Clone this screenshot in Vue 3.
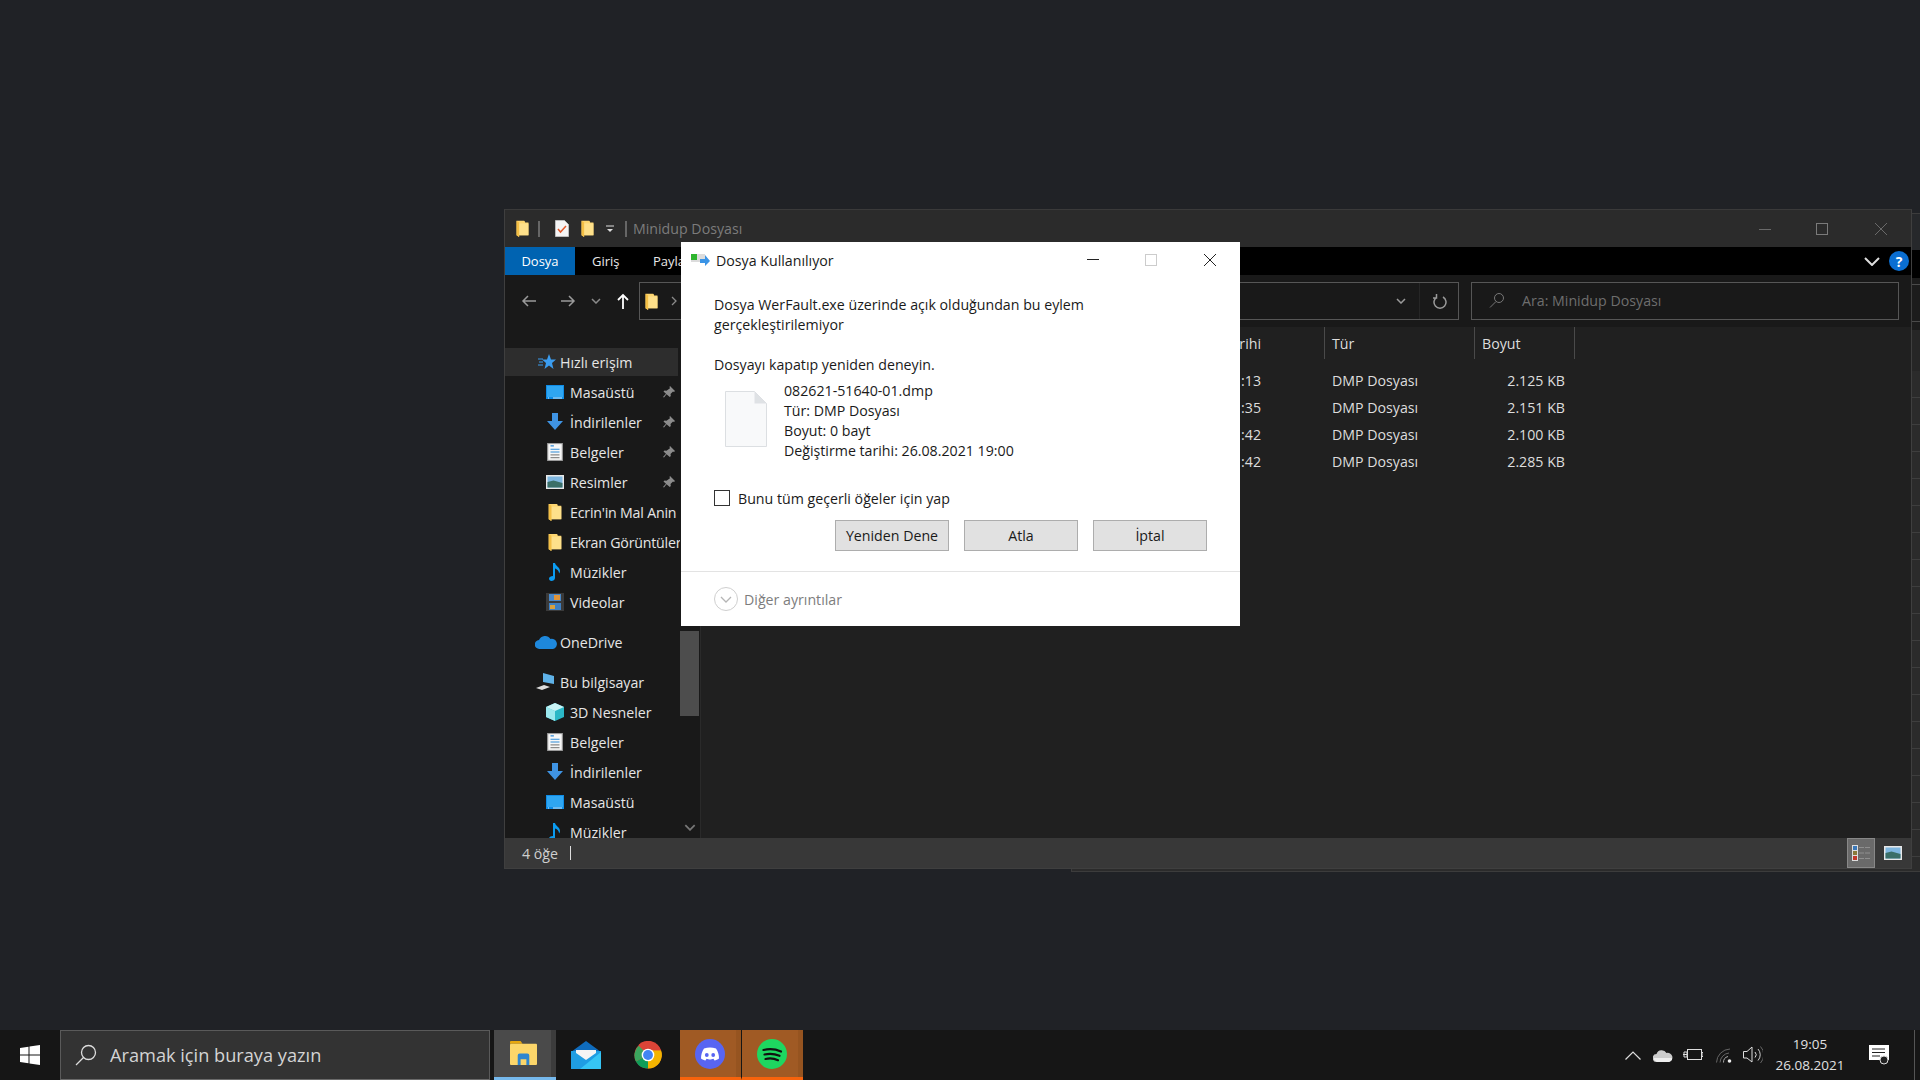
<script setup>
const quick = [
  { icon: 'desk', label: 'Masaüstü', pin: true },
  { icon: 'down', label: 'İndirilenler', pin: true },
  { icon: 'doc', label: 'Belgeler', pin: true },
  { icon: 'pic', label: 'Resimler', pin: true },
  { icon: 'folder', label: "Ecrin'in Mal Anin" },
  { icon: 'folder', label: 'Ekran Görüntüler' },
  { icon: 'music', label: 'Müzikler' },
  { icon: 'film', label: 'Videolar' },
]
const pc = [
  { icon: 'cube', label: '3D Nesneler' },
  { icon: 'doc', label: 'Belgeler' },
  { icon: 'down', label: 'İndirilenler' },
  { icon: 'desk', label: 'Masaüstü' },
  { icon: 'music', label: 'Müzikler' },
]
const rows = [
  { t: ':13', s: '2.125 KB' },
  { t: ':35', s: '2.151 KB' },
  { t: ':42', s: '2.100 KB' },
  { t: ':42', s: '2.285 KB' },
]
const behind = Array.from({ length: 19 }, (_, i) => i)
</script>

<template>
  <div class="desktop">
    <svg class="defs" width="0" height="0">
      <symbol id="folder" viewBox="0 0 14 20"><path d="M0 1h9l1 1v1h4v15H3v2l-3-2z" fill="#fdd670"/><path d="M3 4h11v14H3z" fill="#fee08a"/><path d="M0 1l3 2v17l-3-2z" fill="#f4bf45"/></symbol>
      <symbol id="desk" viewBox="0 0 18 14"><rect x="0" y="0" width="18" height="14" fill="#0f8ce6"/><rect x="1" y="1" width="16" height="11" fill="#2fa6f2"/><path d="M2 13h1M7 13h9" stroke="#cfe9fb"/></symbol>
      <symbol id="down" viewBox="0 0 18 18"><path d="M6 0h6v8h5l-8 9-8-9h5z" fill="#3f94e4"/></symbol>
      <symbol id="doc" viewBox="0 0 14 16"><rect x=".5" y=".5" width="13" height="15" fill="#f7f7f7" stroke="#9a9a9a"/><path d="M3 2.500h3M3 5.500h8M3 8h8" stroke="#2f8ad6"/><path d="M3 10.500h8M3 13h8" stroke="#8a8a8a"/></symbol>
      <symbol id="pic" viewBox="0 0 18 14"><rect width="18" height="14" fill="#e8e8e8"/><rect x="1.500" y="1.500" width="15" height="11" fill="#7fb7e0"/><path d="M1.500 7l6-1.500 9 2.500v4.500h-15z" fill="#3b6f68"/></symbol>
      <symbol id="music" viewBox="0 0 12 18"><path d="M4 0h2c.5 3 5 4 5 8 0 1-.5 2-1 2.500.3-2.500-2-4.500-4-5V15c0 2-2 3-3.500 3S0 17 0 15.500 2 13 4 13z" fill="#0b9bf0"/></symbol>
      <symbol id="film" viewBox="0 0 18 18"><rect width="18" height="18" fill="#3a3a3a"/><rect x="3" y="1" width="12" height="7" fill="#4a88c7"/><rect x="3" y="10" width="12" height="7" fill="#3f7fc0"/><rect x="8" y="2" width="6" height="5" fill="#e0953a"/><rect x="4" y="12" width="5" height="4" fill="#d9a13f"/></symbol>
      <symbol id="cube" viewBox="0 0 18 18"><path d="M9 0l9 4v10l-9 4-9-4V4z" fill="#2bb7c6"/><path d="M0 4l9 4v10l-9-4z" fill="#9be8ee"/><path d="M9 0l9 4-9 4-9-4z" fill="#c9f4f6"/></symbol>
      <symbol id="pin" viewBox="0 0 12 12"><path d="M7 0l5 5-1 1-1-.5-2.500 2.500.3 2-1 1L3.500 8.200 1 11.500 0 11l3-3.200L.5 5.500l1-1 2 .3L7 2.300 6.500 1z" fill="#8c8c8c"/></symbol>
      <symbol id="star" viewBox="0 0 18 16"><path d="M11 0l2 5.500h5l-4 3.500 1.500 6-4.500-3.500L6.500 15 8 9 4 5.500h5z" fill="#3b9df0"/><path d="M0 5h5M1 8h4M0 11h5" stroke="#3b9df0"/></symbol>
    </svg>

    <div class="back-window">
      <div class="bw-title"></div>
      <div class="bw-rib"></div>
      <div class="bw-nav"><div></div></div>
      <div class="bw-gap"></div>
      <div v-for="n in behind" :key="n" class="bw-row"></div>
    </div>

    <section class="explorer">
      <header class="ex-title">
        <svg class="i-folder"><use href="#folder"/></svg>
        <i class="bar"></i>
        <svg class="i-check" viewBox="0 0 14 17"><path d="M.5.500h9l4 4v12H.5z" fill="#f4f4f4" stroke="#bbb"/><path d="M3 9l2.500 3L11 6" fill="none" stroke="#e25a2b" stroke-width="1.500"/></svg>
        <svg class="i-folder"><use href="#folder"/></svg>
        <svg class="i-drop" viewBox="0 0 8 8"><path d="M0 1h8" stroke="#ddd"/><path d="M1 4h6L4 7z" fill="#ddd"/></svg>
        <i class="bar"></i>
        <span class="ex-name">Minidup Dosyası</span>
        <div class="ex-ctrl">
          <svg viewBox="0 0 12 12"><path d="M0 6.500h12" stroke="#6a6a6a"/></svg>
          <svg viewBox="0 0 12 12"><rect x=".5" y=".5" width="11" height="11" fill="none" stroke="#7a7a7a"/></svg>
          <svg viewBox="0 0 12 12"><path d="M0 0l12 12M12 0L0 12" stroke="#6a6a6a"/></svg>
        </div>
      </header>

      <nav class="ribbon">
        <span class="tab active">Dosya</span>
        <span class="tab">Giriş</span>
        <span class="tab">Paylaş</span>
        <svg class="rb-chev" viewBox="0 0 16 9"><path d="M1 1l7 7 7-7" fill="none" stroke="#ddd" stroke-width="2"/></svg>
        <span class="help">?</span>
      </nav>

      <div class="navbar">
        <svg class="nv a1" viewBox="0 0 16 14"><path d="M15 7H2M7 2L2 7l5 5" fill="none" stroke="#9a9a9a" stroke-width="1.500"/></svg>
        <svg class="nv a2" viewBox="0 0 16 14"><path d="M1 7h13M9 2l5 5-5 5" fill="none" stroke="#9a9a9a" stroke-width="1.500"/></svg>
        <svg class="nv a3" viewBox="0 0 10 6"><path d="M1 1l4 4 4-4" fill="none" stroke="#8a8a8a" stroke-width="1.500"/></svg>
        <svg class="nv a4" viewBox="0 0 14 16"><path d="M7 16V2M2 7l5-5 5 5" fill="none" stroke="#fff" stroke-width="1.800"/></svg>
        <div class="addr">
          <svg class="i-folder"><use href="#folder"/></svg>
          <svg class="gt" viewBox="0 0 6 10"><path d="M1 1l4 4-4 4" fill="none" stroke="#8a8a8a" stroke-width="1.300"/></svg>
          <svg class="addr-chev" viewBox="0 0 10 6"><path d="M1 1l4 4 4-4" fill="none" stroke="#9a9a9a" stroke-width="1.500"/></svg>
          <i class="addr-sep"></i>
          <svg class="refresh" viewBox="0 0 14 16"><path d="M4 3a6 6 0 1 0 6 0M3.500 0v4h-3.500" fill="none" stroke="#9a9a9a" stroke-width="1.500" transform="translate(0 1)"/></svg>
        </div>
        <div class="search">
          <svg viewBox="0 0 16 16"><circle cx="10" cy="6" r="4.500" fill="none" stroke="#777"/><path d="M7 9.500L1 15.500" stroke="#777"/></svg>
          <span>Ara: Minidup Dosyası</span>
        </div>
      </div>

      <div class="ex-body">
        <aside class="side">
          <div class="tree">
            <div class="row top sel"><svg class="ico"><use href="#star"/></svg><span>Hızlı erişim</span></div>
            <div v-for="q in quick" :key="q.label" class="row">
              <svg class="ico"><use :href="'#' + q.icon"/></svg>
              <span class="lbl" :class="{ tight: q.icon === 'folder' }">{{ q.label }}</span>
              <svg v-if="q.pin" class="pin"><use href="#pin"/></svg>
            </div>
            <div class="row top wide gap">
              <svg class="ico" viewBox="0 0 22 14"><path d="M4.500 14a4.500 4.500 0 0 1-.5-9A6.500 6.500 0 0 1 15.500 4 5 5 0 0 1 18 14z" fill="#1e88dc"/></svg>
              <span>OneDrive</span>
            </div>
            <div class="row top wide gap">
              <svg class="ico" viewBox="0 0 20 18"><path d="M7 0l11 3v8l-11-2z" fill="#5fb2e8"/><path d="M0 15l8-3 6 2-8 3z" fill="#ddd"/></svg>
              <span>Bu bilgisayar</span>
            </div>
            <div v-for="p in pc" :key="p.label" class="row">
              <svg class="ico"><use :href="'#' + p.icon"/></svg>
              <span class="lbl">{{ p.label }}</span>
            </div>
          </div>
          <div class="scroll">
            <div class="thumb"></div>
            <svg viewBox="0 0 10 6"><path d="M1 1l4 4 4-4" fill="none" stroke="#777" stroke-width="1.500"/></svg>
          </div>
        </aside>
        <main class="files">
          <div class="heads">
            <span class="h-date">rihi</span>
            <span class="h-type">Tür</span>
            <span class="h-size">Boyut</span>
          </div>
          <div v-for="(r, i) in rows" :key="i" class="frow">
            <span class="c-date">{{ r.t }}</span>
            <span class="c-type">DMP Dosyası</span>
            <span class="c-size">{{ r.s }}</span>
          </div>
        </main>
      </div>

      <footer class="status">
        <span>4 öğe</span><i></i>
        <div class="views">
          <span class="v-on"><svg viewBox="0 0 18 16"><rect width="6" height="16" fill="#ddd"/><rect x="1" y="1" width="4" height="4" fill="#3b78b8"/><rect x="1" y="6" width="4" height="4" fill="#8a7a3a"/><rect x="1" y="11" width="4" height="4" fill="#c0392b"/><path d="M7 2.500h5M13 2.500h5M7 8h5M13 8h5M7 13.500h5M13 13.500h5" stroke="#8f8f8f"/></svg></span>
          <span class="v-off"><svg viewBox="0 0 18 14"><use href="#pic"/></svg></span>
        </div>
      </footer>
    </section>

    <section class="dialog">
      <header class="d-title">
        <svg class="d-ico" viewBox="0 0 20 14"><rect x="0" y="1" width="14" height="8" fill="#dcdcdc"/><rect x="0" y="1" width="6" height="6" fill="#2fb52f"/><path d="M9 6h5V2l5 6-5 5v-3H9z" fill="#3b94e6"/></svg>
        <span>Dosya Kullanılıyor</span>
        <div class="d-ctrl">
          <svg viewBox="0 0 12 12"><path d="M0 5.500h12" stroke="#222"/></svg>
          <svg viewBox="0 0 12 12"><rect x=".5" y=".5" width="11" height="11" fill="none" stroke="#ccc"/></svg>
          <svg viewBox="0 0 12 12"><path d="M0 0l12 12M12 0L0 12" stroke="#222"/></svg>
        </div>
      </header>
      <div class="d-body">
        <p class="msg">Dosya WerFault.exe üzerinde açık olduğundan bu eylem<br>gerçekleştirilemiyor</p>
        <p class="retry">Dosyayı kapatıp yeniden deneyin.</p>
        <div class="fileinfo">
          <svg class="f-ico" viewBox="0 0 42 56"><path d="M.5.500h29l12 12v43H.5z" fill="#f8f9fa" stroke="#dcdfe2"/><path d="M29.500.500v12h12z" fill="#dfe2e5"/></svg>
          <div class="f-text">
            <div>082621-51640-01.dmp</div>
            <div>Tür: DMP Dosyası</div>
            <div>Boyut: 0 bayt</div>
            <div>Değiştirme tarihi: 26.08.2021 19:00</div>
          </div>
        </div>
        <label class="chk"><i></i><span>Bunu tüm geçerli öğeler için yap</span></label>
        <div class="btns">
          <button>Yeniden Dene</button>
          <button>Atla</button>
          <button>İptal</button>
        </div>
      </div>
      <footer class="d-foot">
        <span class="circle"><svg viewBox="0 0 12 7"><path d="M1 1l5 5 5-5" fill="none" stroke="#b5b5b5" stroke-width="1.300"/></svg></span>
        <span>Diğer ayrıntılar</span>
      </footer>
    </section>

    <footer class="taskbar">
      <div class="start">
        <svg viewBox="0 0 20 20"><path d="M0 3l8.500-1.200V9.500H0zM9.500 1.600L20 0v9.500H9.500zM0 10.500h8.500v7.700L0 17zM9.500 10.500H20V20L9.500 18.400z" fill="#fff"/></svg>
      </div>
      <div class="tsearch">
        <svg viewBox="0 0 22 22"><circle cx="13.500" cy="8.500" r="7" fill="none" stroke="#ddd" stroke-width="1.300"/><path d="M8.500 13.500L1 21" stroke="#ddd" stroke-width="1.300"/></svg>
        <span>Aramak için buraya yazın</span>
      </div>
      <div class="tile t-active">
        <svg viewBox="0 0 28 28"><path d="M0 2a1 1 0 0 1 1-1h10l2 3H0z" fill="#e8a70e"/><rect y="4" width="28" height="22" rx="1" fill="#fcd66a"/><path d="M8 26V16a2 2 0 0 1 2-2h8a2 2 0 0 1 2 2v10h-3v-6h-6v6z" fill="#2e86d0"/></svg>
      </div>
      <div class="tile">
        <svg class="mail" viewBox="0 0 30 28"><path d="M15 0l15 11H0z" fill="#0f6cbd"/><rect y="10" width="30" height="18" fill="#1f9de2"/><path d="M5 9h20v3l-10 7L5 12z" fill="#f4f4f4"/><path d="M30 11v17H9z" fill="#36c5f4"/></svg>
      </div>
      <div class="tile">
        <svg class="chrome" viewBox="0 0 30 30"><circle cx="15" cy="15" r="14.500" fill="#db4437"/><path d="M15 15L2 22a14.500 14.500 0 0 0 13 7.500z" fill="#0f9d58"/><path d="M15 29.500A14.500 14.500 0 0 0 29 10H15z" fill="#f4b400"/><path d="M2 22A14.500 14.500 0 0 1 5 5l10 10z" fill="#3ba55d"/><path d="M5 4A14.500 14.500 0 0 1 29 10H15z" fill="#db4437"/><circle cx="15" cy="15" r="6.800" fill="#fff"/><circle cx="15" cy="15" r="5.300" fill="#4285f4"/></svg>
      </div>
      <div class="tile t-run first">
        <svg viewBox="0 0 30 30"><circle cx="15" cy="15" r="15" fill="#5865f2"/><path d="M9 9.500c4-1.500 8-1.500 12 0 2 3 3 6 3 10-1.500 1.200-3 1.800-4.500 2l-1-1.700c-3 1-4 1-7 0l-1 1.700c-1.500-.2-3-.8-4.500-2 0-4 1-7 3-10z" fill="#fff"/><circle cx="11.800" cy="16" r="1.900" fill="#5865f2"/><circle cx="18.200" cy="16" r="1.900" fill="#5865f2"/></svg>
      </div>
      <div class="tile t-run last">
        <svg viewBox="0 0 30 30"><circle cx="15" cy="15" r="15" fill="#1ed760"/><path d="M6.500 11c6-1.500 12-1 17.500 1.500M7.500 15.500c5-1.200 10-.8 15 1.300M8.500 20c4.300-1 8.500-.6 12.500 1.200" fill="none" stroke="#111" stroke-width="2.200" stroke-linecap="round"/></svg>
      </div>

      <div class="tray">
        <svg class="t1" viewBox="0 0 16 9"><path d="M.5 8.500L8 1l7.500 7.500" fill="none" stroke="#ddd" stroke-width="1.200"/></svg>
        <svg class="t2" viewBox="0 0 20 13"><path d="M4 13a4 4 0 0 1-.5-8A5.500 5.500 0 0 1 13.500 4 4.500 4.500 0 0 1 16 13z" fill="#ccc"/><path d="M1 9h18v2l-3 2H4l-3-2z" fill="#eee"/></svg>
        <svg class="t3" viewBox="0 0 20 12"><rect x="4.500" y=".5" width="14" height="10" fill="none" stroke="#ddd"/><path d="M19 3.500h1v4h-1M0 5.500h4M1 3h3v5H1z" fill="none" stroke="#ddd"/></svg>
        <svg class="t4" viewBox="0 0 16 15"><path d="M.5 14.500A14 14 0 0 1 14 1M4 14.500A10 10 0 0 1 13 5" fill="none" stroke="#666"/><path d="M7.500 14.500A6 6 0 0 1 12 8.500" fill="none" stroke="#aaa"/><circle cx="13.500" cy="13" r="1.800" fill="#eee"/></svg>
        <svg class="t5" viewBox="0 0 20 20"><path d="M.5 6.500h3.500L9 2v15L4 13H.5z" fill="none" stroke="#ddd"/><path d="M12 7a4 4 0 0 1 0 5.500" fill="none" stroke="#ddd"/><path d="M15 4a8.500 8.500 0 0 1 0 11.500" fill="none" stroke="#ccc"/><path d="M17.500 1.500a12 12 0 0 1 0 16.500" fill="none" stroke="#666"/></svg>
        <div class="clock"><div>19:05</div><div>26.08.2021</div></div>
        <svg class="notif" viewBox="0 0 20 20"><path d="M0 0h20v15h-4l-1 3-3-3H0z" fill="#fff"/><path d="M3 4h13M3 7.500h13M3 11h8" stroke="#222"/><circle cx="15" cy="15" r="4" fill="#222" stroke="#ddd"/></svg>
        <i class="show"></i>
      </div>
    </footer>
  </div>
</template>

<style>
html, body { margin: 0; background: #202226; overflow: hidden; }
</style>

<style scoped>
* { box-sizing: border-box; }
.desktop { position: relative; width: 1920px; height: 1080px; background: #202226; overflow: hidden; font-family: "Open Sans", "Noto Sans", sans-serif; font-size: 14.200px; color: #e6e6e6; display: flex; flex-direction: column; justify-content: flex-end; }
.defs { position: absolute; }
svg { display: block; flex: none; }
i { display: block; font-style: normal; }

.back-window { position: absolute; left: 1071px; top: 213px; right: -10px; height: 659px; background: #303030; border: 1px solid #3c3c3c; overflow: hidden; }
.bw-title { height: 36px; background: #26282b; }
.bw-rib { height: 28px; background: #000; }
.bw-nav { height: 52px; background: #1c1c1c; padding-top: 6px; }
.bw-nav div { height: 38px; border-top: 1px solid #4a4a4a; border-bottom: 1px solid #4a4a4a; }
.bw-gap { height: 41px; background: #262626; }
.bw-row { height: 27px; background: #2b2b2b; border-bottom: 1px solid #3e3e3e; }

.explorer { position: absolute; left: 504px; top: 209px; width: 1408px; height: 660px; display: flex; flex-direction: column; background: #202020; border: 1px solid #3f3f3f; border-top-color: #3a3a3a; }
.ex-title { height: 37px; flex: none; background: #2b2b2b; display: flex; align-items: center; padding-left: 11px; }
.i-folder { width: 13px; height: 17px; }
.ex-title .i-folder:first-child { margin-right: 9px; }
.bar { width: 2px; height: 16px; background: #666; }
.i-check { width: 14px; height: 17px; margin: 0 12px 0 15px; }
.i-drop { width: 8px; height: 8px; margin: 0 11px 0 12px; }
.ex-name { margin-left: 6px; color: #7c7c7c; font-size: 14.200px; }
.ex-ctrl { margin-left: auto; display: flex; gap: 46px; padding-right: 24px; }
.ex-ctrl svg { width: 12px; height: 12px; }
.ex-ctrl svg:nth-child(2) { margin: 0 1px 0 -1px; }

.ribbon { height: 28px; flex: none; background: #000; display: flex; align-items: center; font-size: 13px; color: #e8e8e8; }
.tab { display: flex; align-items: center; height: 100%; margin-right: 0; padding-left: 17px; width: 70px; }
.tab.active { background: #0063b1; color: #fff; justify-content: center; padding: 0; margin-right: 17px; }
.tab:nth-child(2) { width: 61px; padding-left: 0; }
.tab:nth-child(3) { padding-left: 0; }
.rb-chev { width: 16px; height: 9px; margin-left: auto; }
.help { width: 20px; height: 20px; border-radius: 50%; background: #0a6ed1; color: #fff; font-weight: 700; font-size: 14px; display: flex; align-items: center; justify-content: center; margin: 0 2px 0 9px; }

.navbar { height: 52px; flex: none; background: #191919; display: flex; align-items: center; padding-left: 16px; }
.nv.a1 { width: 16px; height: 14px; }
.nv.a2 { width: 16px; height: 14px; margin-left: 23px; }
.nv.a3 { width: 10px; height: 6px; margin-left: 15px; }
.nv.a4 { width: 14px; height: 16px; margin-left: 15px; }
.addr { margin-left: 9px; width: 820px; height: 38px; border: 1px solid #565656; display: flex; align-items: center; padding-left: 5px; }
.gt { width: 6px; height: 10px; margin-left: 13px; }
.addr-chev { width: 10px; height: 6px; margin-left: auto; }
.addr-sep { width: 1px; height: 36px; background: #262626; margin-left: 13px; }
.refresh { width: 14px; height: 16px; margin: 0 11px 0 13px; }
.search { margin-left: 12px; width: 428px; height: 38px; border: 1px solid #565656; display: flex; align-items: center; padding: 0 0 2px 17px; color: #6e6e6e; font-size: 14.200px; }
.search svg { width: 16px; height: 16px; margin-right: 17px; }

.ex-body { flex: 1; min-height: 0; display: flex; }
.side { width: 196px; flex: none; display: flex; background: #191919; overflow: hidden; border-right: 1px solid #2a2a2a; }
.tree { width: 175px; flex: none; padding: 21px 0 0 0; overflow: hidden; }
.row { height: 30px; display: flex; align-items: center; padding-left: 41px; white-space: nowrap; font-size: 14.200px; position: relative; overflow: hidden; }
.row .ico { width: 18px; height: 18px; margin-right: 6px; }
.row.top { padding-left: 33px; }
.row.top .ico { margin-right: 4px; }
.row.wide { padding-left: 30px; }
.row.wide .ico { width: 22px; margin-right: 3px; }
.row.gap { margin-top: 10px; }
.row.sel { background: #2d2d2d; margin-right: 2px; height: 28px; margin-bottom: 1px; }
.lbl { flex: none; }
.lbl.tight { letter-spacing: -0.2px; }
.pin { width: 12px; height: 12px; position: absolute; left: 158px; }
.scroll { width: 19px; flex: none; display: flex; flex-direction: column; align-items: center; position: relative; padding-top: 304px; }
.thumb { width: 19px; height: 85px; background: #4d4d4d; }
.scroll svg { width: 12px; height: 7px; margin-top: 108px; }

.files { flex: 1; background: #202020; }
.heads { height: 32px; display: flex; font-size: 14.200px; color: #ddd; align-items: center; }
.heads span { height: 100%; display: flex; align-items: center; border-right: 1px solid #4a4a4a; flex: none; }
.h-date { width: 624px; justify-content: flex-end; padding-right: 63px; }
.h-type { width: 150px; padding-left: 7px; }
.h-size { width: 100px; padding-left: 7px; }
.frow { height: 27px; display: flex; align-items: center; font-size: 14.200px; color: #ddd; }
.frow:nth-child(2) { margin-top: 8px; }
.c-date { width: 624px; text-align: right; padding-right: 64px; flex: none; }
.c-type { width: 150px; padding-left: 7px; flex: none; }
.c-size { width: 90px; text-align: right; flex: none; }

.status { height: 30px; flex: none; background: #383838; display: flex; align-items: center; padding-left: 17px; color: #cfcfcf; font-size: 14.200px; }
.status i { width: 1px; height: 14px; background: #ddd; margin-left: 12px; }
.views { margin-left: auto; display: flex; height: 100%; }
.views span { display: flex; align-items: center; justify-content: center; height: 100%; }
.v-on { width: 28px; background: #6a6a6a; border: 1px solid #888; }
.v-on svg { width: 18px; height: 16px; }
.v-off { width: 36px; }
.v-off svg { width: 18px; height: 14px; }

.dialog { position: absolute; left: 681px; top: 242px; width: 559px; height: 384px; background: #fff; color: #1a1a1a; display: flex; flex-direction: column; font-size: 14.200px; }
.d-title { height: 38px; flex: none; display: flex; align-items: center; padding: 0 0 2px 10px; font-size: 14.200px; }
.d-ico { width: 20px; height: 14px; margin-right: 5px; }
.d-ctrl { margin-left: auto; display: flex; gap: 46px; padding-right: 24px; }
.d-ctrl svg { width: 12px; height: 12px; }
.d-ctrl svg:nth-child(2) { margin: 0 1px 0 -1px; }
.d-ctrl svg:nth-child(1) { margin-right: 1px; }
.d-body { flex: 1; padding: 15px 33px 0; }
.msg, .retry { margin: 0; line-height: 20px; }
.msg { margin-bottom: 20px; }
.fileinfo { display: flex; margin-top: 6px; }
.f-ico { width: 42px; height: 56px; margin: 10px 17px 0 11px; }
.f-text { line-height: 20px; }
.chk { display: flex; align-items: center; margin-top: 27px; height: 20px; }
.chk i { width: 16px; height: 16px; border: 1px solid #333; margin-right: 8px; }
.btns { display: flex; justify-content: flex-end; gap: 15px; margin-top: 12px; }
button { width: 114px; height: 31px; background: #e1e1e1; border: 1px solid #adadad; font: inherit; color: #1a1a1a; padding: 0; }
.d-foot { height: 55px; flex: none; border-top: 1px solid #e3e3e3; display: flex; align-items: center; padding-left: 33px; color: #7d7d7d; }
.circle { width: 24px; height: 24px; border: 1px solid #cfcfcf; border-radius: 50%; display: flex; align-items: center; justify-content: center; margin-right: 6px; }
.circle svg { width: 12px; height: 7px; }

.taskbar { position: relative; height: 50px; flex: none; background: #161616; display: flex; align-items: stretch; }
.start { width: 60px; flex: none; display: flex; align-items: center; justify-content: center; }
.start svg { width: 20px; height: 20px; }
.tsearch { width: 430px; flex: none; background: #333; border: 1px solid #5a5a5a; border-bottom-color: #6a6a6a; display: flex; align-items: center; padding-left: 14px; font-size: 18.200px; color: #d4d4d4; }
.tsearch svg { width: 22px; height: 22px; margin-right: 13px; }
.tile { width: 62px; flex: none; display: flex; align-items: center; justify-content: center; padding-right: 2px; }
.tile svg { width: 30px; height: 30px; }
.tile svg.mail { height: 28px; }
.tile svg.chrome { width: 28px; height: 28px; }
.t-active { margin-left: 4px; background: linear-gradient(90deg, #4a4a4a 57px, #3c3c3c 57px); border-bottom: 3px solid #76b9ed; padding-right: 4px; }
.t-active svg { width: 27px; height: 27px; }
.t-run { background: linear-gradient(90deg, #a05a24 56px, #965420 56px); border-bottom: 3px solid #f7630c; }
.t-run.first { border-right: 1px solid #161616; }
.t-run.last { width: 61px; }
.tray { margin-left: auto; display: flex; align-items: center; width: 298px; color: #e0e0e0; position: relative; }
.t1 { width: 16px; height: 9px; margin-left: 3px; }
.t2 { width: 20px; height: 13px; margin-left: 12px; }
.t3 { width: 20px; height: 12px; margin-left: 10px; }
.t4 { width: 16px; height: 15px; margin-left: 13px; }
.t5 { width: 20px; height: 20px; margin-left: 11px; }
.clock { width: 78px; text-align: center; margin-left: 8px; font-size: 13.500px; line-height: 21px; flex: none; margin-top: -1px; }
.notif { width: 20px; height: 20px; margin-left: 20px; }
.show { position: absolute; right: 5px; top: 0; width: 1px; height: 50px; background: #555; }
</style>
